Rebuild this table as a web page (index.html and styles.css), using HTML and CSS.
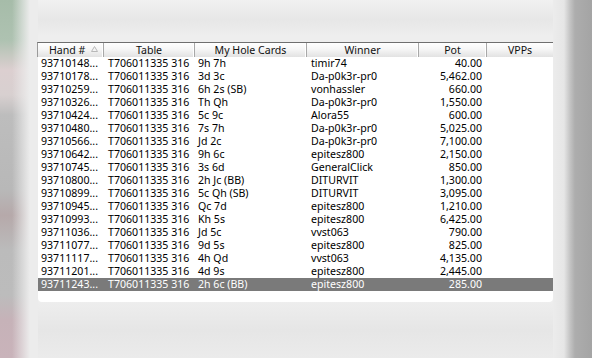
FILE: index.html
```html
<!DOCTYPE html>
<html>
<head>
<meta charset="utf-8">
<link rel="stylesheet" href="styles.css">
</head>
<body>
<div class="screen">
  <div class="edge-left"></div>
  <div class="main">
    <div class="list">
      <div class="thead">
        <div class="th th-hand">Hand #<svg class="sort" width="7" height="6" viewBox="0 0 7 6"><path d="M0.5 5.5 L3.5 0.5 L6.5 5.5 Z" fill="#f4f4f4" stroke="#b8b8b8" stroke-width="1"/></svg></div>
        <div class="th">Table</div>
        <div class="th">My Hole Cards</div>
        <div class="th">Winner</div>
        <div class="th">Pot</div>
        <div class="th th-last">VPPs</div>
      </div>
      <div class="tbody">
        <div class="tr"><span class="c-hand">93710148...</span><span class="c-table">T706011335 316</span><span class="c-cards">9h 7h</span><span class="c-win">timir74</span><span class="c-pot">40.00</span><span></span></div>
        <div class="tr"><span class="c-hand">93710178...</span><span class="c-table">T706011335 316</span><span class="c-cards">3d 3c</span><span class="c-win">Da-p0k3r-pr0</span><span class="c-pot">5,462.00</span><span></span></div>
        <div class="tr"><span class="c-hand">93710259...</span><span class="c-table">T706011335 316</span><span class="c-cards">6h 2s (SB)</span><span class="c-win">vonhassler</span><span class="c-pot">660.00</span><span></span></div>
        <div class="tr"><span class="c-hand">93710326...</span><span class="c-table">T706011335 316</span><span class="c-cards">Th Qh</span><span class="c-win">Da-p0k3r-pr0</span><span class="c-pot">1,550.00</span><span></span></div>
        <div class="tr"><span class="c-hand">93710424...</span><span class="c-table">T706011335 316</span><span class="c-cards">5c 9c</span><span class="c-win">Alora55</span><span class="c-pot">600.00</span><span></span></div>
        <div class="tr"><span class="c-hand">93710480...</span><span class="c-table">T706011335 316</span><span class="c-cards">7s 7h</span><span class="c-win">Da-p0k3r-pr0</span><span class="c-pot">5,025.00</span><span></span></div>
        <div class="tr"><span class="c-hand">93710566...</span><span class="c-table">T706011335 316</span><span class="c-cards">Jd 2c</span><span class="c-win">Da-p0k3r-pr0</span><span class="c-pot">7,100.00</span><span></span></div>
        <div class="tr"><span class="c-hand">93710642...</span><span class="c-table">T706011335 316</span><span class="c-cards">9h 6c</span><span class="c-win">epitesz800</span><span class="c-pot">2,150.00</span><span></span></div>
        <div class="tr"><span class="c-hand">93710745...</span><span class="c-table">T706011335 316</span><span class="c-cards">3s 6d</span><span class="c-win">GeneralClick</span><span class="c-pot">850.00</span><span></span></div>
        <div class="tr"><span class="c-hand">93710800...</span><span class="c-table">T706011335 316</span><span class="c-cards">2h Jc (BB)</span><span class="c-win">DITURVIT</span><span class="c-pot">1,300.00</span><span></span></div>
        <div class="tr"><span class="c-hand">93710899...</span><span class="c-table">T706011335 316</span><span class="c-cards">5c Qh (SB)</span><span class="c-win">DITURVIT</span><span class="c-pot">3,095.00</span><span></span></div>
        <div class="tr"><span class="c-hand">93710945...</span><span class="c-table">T706011335 316</span><span class="c-cards">Qc 7d</span><span class="c-win">epitesz800</span><span class="c-pot">1,210.00</span><span></span></div>
        <div class="tr"><span class="c-hand">93710993...</span><span class="c-table">T706011335 316</span><span class="c-cards">Kh 5s</span><span class="c-win">epitesz800</span><span class="c-pot">6,425.00</span><span></span></div>
        <div class="tr"><span class="c-hand">93711036...</span><span class="c-table">T706011335 316</span><span class="c-cards">Jd 5c</span><span class="c-win">vvst063</span><span class="c-pot">790.00</span><span></span></div>
        <div class="tr"><span class="c-hand">93711077...</span><span class="c-table">T706011335 316</span><span class="c-cards">9d 5s</span><span class="c-win">epitesz800</span><span class="c-pot">825.00</span><span></span></div>
        <div class="tr"><span class="c-hand">93711117...</span><span class="c-table">T706011335 316</span><span class="c-cards">4h Qd</span><span class="c-win">vvst063</span><span class="c-pot">4,135.00</span><span></span></div>
        <div class="tr"><span class="c-hand">93711201...</span><span class="c-table">T706011335 316</span><span class="c-cards">4d 9s</span><span class="c-win">epitesz800</span><span class="c-pot">2,445.00</span><span></span></div>
        <div class="tr selected"><span class="c-hand">93711243...</span><span class="c-table">T706011335 316</span><span class="c-cards">2h 6c (BB)</span><span class="c-win">epitesz800</span><span class="c-pot">285.00</span><span></span></div>
      </div>
    </div>
  </div>
  <div class="edge-right"></div>
</div>
</body>
</html>
```
FILE: styles.css
```css
html, body {
  margin: 0;
  padding: 0;
}
body {
  width: 592px;
  height: 358px;
  overflow: hidden;
  background: #ececec;
  font-family: "Noto Sans", "Open Sans", sans-serif;
  font-size: 10.6px;
  color: #000;
}
.screen {
  display: grid;
  grid-template-columns: 38px 515px 39px;
  height: 358px;
}
.edge-left {
  background:
    linear-gradient(to right, rgba(236,236,236,0) 0px, rgba(236,236,236,0) 12px, #ececec 30px),
    linear-gradient(to bottom, #a6bca9 0px, #aec2b1 40px, #dccfd0 70px, #d8d0d0 95px, #bdbdbd 115px, #b8b8b8 190px, #b6a9aa 215px, #bbbbbb 250px, #bcbcbc 295px, #c6b2b8 320px, #c9b3ba 358px);
}
.main {
  padding-top: 42px;
  background: linear-gradient(to bottom, #f1f1f1 0px, #e7e7e7 20px, #eeeeee 36px, #eeeeee 300px, #e6e6e6 330px, #ebebeb 358px);
}
.list {
  background: #fff;
  padding-bottom: 11px;
  border-radius: 0 0 4px 4px;
}
.thead {
  display: grid;
  grid-template-columns: 66px 91px 112px 112px 68px 66px;
  height: 15px;
  border-top: 1px solid #6f6f6f;
  border-left: 1px solid #9a9a9a;
  background: linear-gradient(to bottom, #ffffff 0%, #f6f6f6 45%, #e2e2e2 100%);
  box-sizing: border-box;
  margin-left: -1px;
}
.th {
  display: flex;
  align-items: center;
  justify-content: center;
  border-right: 1px solid #a8a8a8;
  box-shadow: inset -1px 0 0 #ffffff;
  color: #111;
  line-height: 14px;
  white-space: nowrap;
}
.th-hand {
  justify-content: flex-start;
  padding-left: 11px;
  gap: 6px;
}
.th-last {
  border-right: none;
  box-shadow: none;
}
.sort {
  margin-top: -2px;
}
.tbody {
  display: flex;
  flex-direction: column;
}
.tr {
  display: grid;
  grid-template-columns: 66px 91px 112px 112px 68px 66px;
  height: 13px;
  line-height: 13px;
  white-space: nowrap;
}
.tr span {
  overflow: hidden;
}
.tr.selected {
  background: #7a7a7a;
  color: #fff;
}
.c-hand { padding-left: 3px; }
.c-table { padding-left: 4px; }
.c-cards { padding-left: 3px; }
.c-win { padding-left: 4px; }
.c-pot { text-align: right; padding-right: 5px; }
.edge-right {
  background:
    linear-gradient(to right, #ececec 0px, #e6e6e6 11px, #c4c4c4 17px, #adadad 22px, #a4a4a4 39px);
}
```
